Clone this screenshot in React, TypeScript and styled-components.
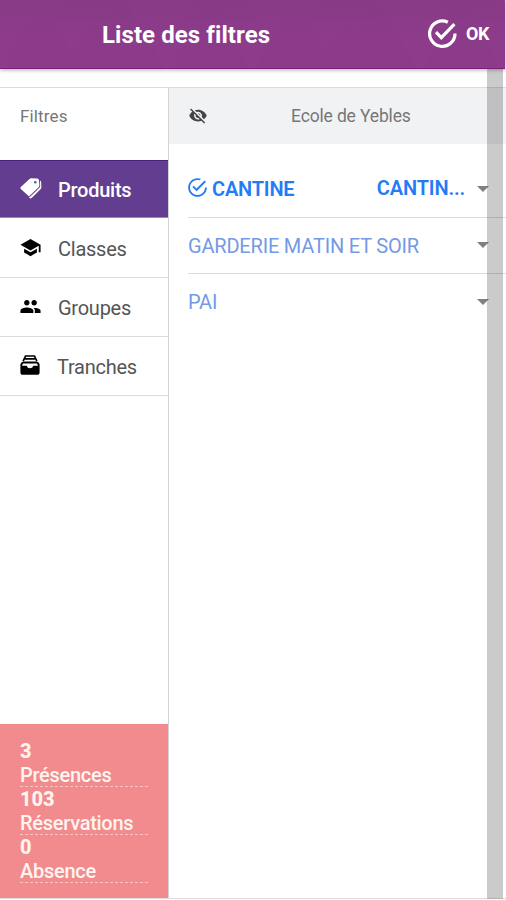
import React from 'react';
import styled, { createGlobalStyle } from 'styled-components';
import {
  IoMdCheckmarkCircleOutline,
  IoMdEyeOff,
  IoMdSchool,
  IoMdPeople,
} from 'react-icons/io';

const GlobalStyle = createGlobalStyle`
  * { box-sizing: border-box; }
  body { margin: 0; background: #fff; font-family: Roboto, sans-serif; }
`;

const Screen = styled.div`
  position: relative;
  width: 506px;
  height: 900px;
  display: flex;
  flex-direction: column;
  overflow: hidden;
  background: #fff;
`;

const Header = styled.header`
  position: relative;
  z-index: 2;
  display: flex;
  align-items: center;
  flex: none;
  width: 505px;
  height: 69px;
  padding-left: 102px;
  color: #fff;
  border-bottom: 1px solid #7d1f7b;
  background:
    conic-gradient(from 150deg at 50% 0, #80368018 60deg, transparent 0) 0 0 / 84px 68px,
    conic-gradient(from 150deg at 50% 0, #80368018 60deg, transparent 0) 30px 20px / 126px 68px,
    linear-gradient(#893b87, #903b8d);
  box-shadow: 0 1px 4px #0005;
`;

const Title = styled.h1`
  margin: 2px 0 0;
  width: 326px;
  font-size: 24px;
  line-height: 30px;
  font-weight: 700;
  letter-spacing: 0.08px;
  white-space: nowrap;
`;

const Confirm = styled.button`
  display: flex;
  align-items: center;
  gap: 9px;
  padding: 0;
  border: 0;
  background: none;
  color: #fff;
  font: 700 18px/24px Roboto, sans-serif;
  letter-spacing: -0.3px;
`;

const Body = styled.main`
  display: flex;
  flex: none;
  height: 812px;
  margin-top: 18px;
  border-top: 1px solid #dcdcdc;
  border-bottom: 1px solid #dedede;
`;

const Sidebar = styled.nav`
  display: flex;
  flex-direction: column;
  width: 169px;
  flex: none;
  border-right: 1px solid #d4d4d4;
`;

const SidebarTitle = styled.div`
  height: 72px;
  padding: 17px 20px;
  color: #777;
  font-size: 17px;
  line-height: 22px;
  letter-spacing: 0.15px;
`;

const NavItem = styled.a<{ $active?: boolean }>`
  display: flex;
  align-items: center;
  height: ${({ $active }) => ($active ? 58 : 59)}px;
  padding-left: 19px;
  border-bottom: 1px solid ${({ $active }) => ($active ? '#a184bb' : '#dcdcdc')};
  background: ${({ $active }) => ($active ? '#633e90' : '#fff')};
  box-shadow: ${({ $active }) => ($active ? 'inset 0 1px #48217d' : 'none')};
  color: ${({ $active }) => ($active ? '#fff' : '#555')};
  font-size: 20px;
  font-weight: ${({ $active }) => ($active ? 500 : 400)};
  letter-spacing: -0.25px;
  svg { color: ${({ $active }) => ($active ? '#fff' : '#000')}; margin-bottom: 1px; }
  &:nth-of-type(2) { height: 60px; }
`;

const NavLabel = styled.span<{ $tight?: boolean }>`
  margin-left: ${({ $tight }) => ($tight ? 15 : 16)}px;
  padding-top: 2px;
`;

const Totals = styled.dl`
  margin: auto 0 0;
  height: 174px;
  padding: 15px 20px 0 20px;
  background: #f18b8d;
  color: #fff4ef;
`;

const Total = styled.div`
  height: 48px;
  border-bottom: 1px dashed #f7c5c4;
  font-size: 20px;
  line-height: 24px;
`;

const Count = styled.dt`
  height: 24px;
  font-weight: 800;
`;

const CountLabel = styled.dd`
  margin: 0;
  font-weight: 500;
  letter-spacing: -0.28px;
`;

const Content = styled.section`
  flex: 1;
  min-width: 0;
`;

const SchoolBar = styled.div`
  display: flex;
  align-items: center;
  height: 56px;
  padding-left: 19px;
  background: #f1f2f4;
  color: #444;
`;

const SchoolName = styled.span`
  margin-left: 83px;
  color: #777;
  font-size: 17.5px;
  line-height: 22px;
  letter-spacing: -0.15px;
`;

const Products = styled.ul`
  list-style: none;
  margin: 17px 0 0 19px;
  padding: 0;
`;

const Product = styled.li<{ $selected?: boolean }>`
  display: flex;
  align-items: center;
  height: ${({ $selected }) => ($selected ? 57 : 56)}px;
  border-bottom: 1px solid #dcdcdc;
  color: ${({ $selected }) => ($selected ? '#237bf5' : '#7499e6')};
  font-size: 20px;
  font-weight: ${({ $selected }) => ($selected ? 600 : 400)};
  letter-spacing: -0.19px;
  &:last-child { border-bottom: 0; }
`;

const CheckIcon = styled(IoMdCheckmarkCircleOutline)`
  margin: 0 0 3px -2px;
`;

const ProductName = styled.span<{ $afterIcon?: boolean }>`
  flex: 1;
  margin-left: ${({ $afterIcon }) => ($afterIcon ? 3 : 0)}px;
  white-space: nowrap;
`;

const Choice = styled.span`
  margin: 0 12px 2px 0;
  letter-spacing: -0.15px;
`;

const Caret = styled.span`
  width: 0;
  height: 0;
  margin: 0 17px 1px 0;
  border: 6px solid transparent;
  border-top-color: #808080;
  border-bottom: 0;
`;

const ScrollTrack = styled.div`
  position: absolute;
  z-index: 1;
  top: 69px;
  bottom: 1px;
  left: 487px;
  width: 16px;
  background: #00000034;
`;

function TagsIcon({ size = 23 }: { size?: number }) {
  return (
    <svg width={size} height={size} viewBox="0 0 23 23">
      <path
        d="M12 1.3l6.3.3q1.5.2 1.6 1.4l.5 5.2q0 1.2-.8 2L11 18.4q-1 1-2 0l-7.2-6.5q-1-1 0-2L10.5 2q.7-.7 1.5-.7z"
        fill="currentColor"
      />
      <path
        d="M20.9 3.6q1.1.4 1.2 1.5l.3 5.2q0 .9-.7 1.6l-9 9q-.9.9-2 .1l-1-1.3q1.1.4 2-.4l8.7-8.5q.9-.9.8-2z"
        fill="currentColor"
      />
      <circle cx="16.3" cy="5.2" r="1.3" fill="#49679e" />
    </svg>
  );
}

function FilingIcon({ size = 23 }: { size?: number }) {
  return (
    <svg width={size} height={size} viewBox="0 0 23 23" fill="none" stroke="currentColor">
      <path d="M5.6 4l1-2h8.8l1 2M4.2 7.2l.9-2.4h11.8l.9 2.4" strokeWidth="1.7" strokeLinejoin="round" />
      <path
        d="M4.2 7.6h13.6q2.8 1 2.8 3v7.6q0 2.6-2.6 2.6H4q-2.6 0-2.6-2.6v-7.6q0-2 2.8-3zM4 9.6l-1 2.2h4.7q.7 2.5 3.3 2.5t3.3-2.5H19l-1-2.2z"
        fill="currentColor"
        fillRule="evenodd"
        stroke="none"
      />
    </svg>
  );
}

const navigation = [
  { label: 'Produits', Icon: TagsIcon },
  { label: 'Classes', Icon: IoMdSchool },
  { label: 'Groupes', Icon: IoMdPeople },
  { label: 'Tranches', Icon: FilingIcon },
];

const totals = [
  { count: 3, label: 'Présences' },
  { count: 103, label: 'Réservations' },
  { count: 0, label: 'Absence' },
];

const products = [
  { name: 'CANTINE', choice: 'CANTIN...' },
  { name: 'GARDERIE MATIN ET SOIR' },
  { name: 'PAI' },
];

export default function App() {
  return (
    <Screen>
      <GlobalStyle />
      <Header>
        <Title>Liste des filtres</Title>
        <Confirm>
          <svg width="29" height="30" viewBox="0 0 29 30" fill="none" stroke="currentColor" strokeWidth="3.2">
            <path d="M19.8 3.2A12.7 12.7 0 1 0 27 14.6" />
            <path d="M8 13.2l5.3 5.4L26.4 5.2" />
          </svg>
          <span>OK</span>
        </Confirm>
      </Header>
      <Body>
        <Sidebar>
          <SidebarTitle>Filtres</SidebarTitle>
          {navigation.map(({ label, Icon }) => (
            <NavItem key={label} $active={label === 'Produits'}>
              <Icon size={23} />
              <NavLabel $tight={label === 'Tranches'}>{label}</NavLabel>
            </NavItem>
          ))}
          <Totals>
            {totals.map(({ count, label }) => (
              <Total key={label}>
                <Count>{count}</Count>
                <CountLabel>{label}</CountLabel>
              </Total>
            ))}
          </Totals>
        </Sidebar>
        <Content>
          <SchoolBar>
            <IoMdEyeOff size={20} />
            <SchoolName>Ecole de Yebles</SchoolName>
          </SchoolBar>
          <Products>
            {products.map(({ name, choice }) => (
              <Product key={name} $selected={Boolean(choice)}>
                {choice && <CheckIcon size={23} />}
                <ProductName $afterIcon={Boolean(choice)}>{name}</ProductName>
                {choice && <Choice>{choice}</Choice>}
                <Caret />
              </Product>
            ))}
          </Products>
        </Content>
      </Body>
      <ScrollTrack />
    </Screen>
  );
}
